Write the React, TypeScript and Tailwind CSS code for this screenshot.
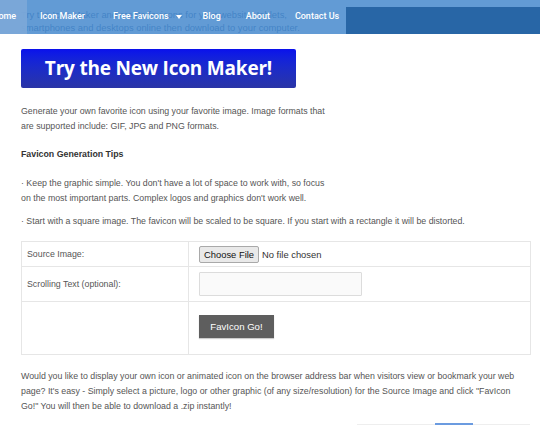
import React from "react";

export default function App() {
  const body = "font-['Liberation_Sans',Arial,sans-serif] text-[8.8px] text-[#555] leading-[15px]";
  return (
    <div className="relative w-[540px] h-[425px] overflow-hidden bg-white">
      <div className={`${body} px-[21px]`}>
        <div className="pt-[8px] text-[#2a5a92] text-[9.4px] leading-[13px] whitespace-nowrap">
          Try the Icon Maker and create favicons for your website, tablets,
          <br />
          smartphones and desktops online then download to your computer.
        </div>
        <div className="mt-[15px] w-[275px] h-[39px] rounded-[2px] bg-gradient-to-b from-[#0a10ec] to-[#2a34a6] flex items-center justify-center">
          <span className="font-['Open_Sans',sans-serif] font-bold text-white text-[19px] tracking-[-0.2px]">
            Try the New Icon Maker!
          </span>
        </div>
        <p className="mt-[16px] whitespace-nowrap">
          Generate your own favorite icon using your favorite image. Image formats that
          <br />
          are supported include: GIF, JPG and PNG formats.
        </p>
        <p className="mt-[13px] font-bold text-[#333] whitespace-nowrap">Favicon Generation Tips</p>
        <p className="mt-[14px] whitespace-nowrap">
          · Keep the graphic simple. You don't have a lot of space to work with, so focus
          <br />
          on the most important parts. Complex logos and graphics don't work well.
        </p>
        <p className="mt-[8px] whitespace-nowrap">
          · Start with a square image. The favicon will be scaled to be square. If you start with a rectangle it will be distorted.
        </p>
        <div className="mt-[12px] w-[510px] border border-[#e6e6e6]">
          <div className="flex h-[25px] border-b border-[#e6e6e6]">
            <div className="w-[167px] border-r border-[#e6e6e6] pl-[5px] flex items-center">Source Image:</div>
            <div className="flex-1 pl-[10px] flex items-center">
              <span className="h-[17px] px-[4px] border border-[#a9a9a9] bg-[#e9e9e9] rounded-[2px] text-[#111] flex items-center text-[9.4px]">
                Choose File
              </span>
              <span className="ml-[3px] text-[#333] text-[9.4px]">No file chosen</span>
            </div>
          </div>
          <div className="flex h-[35px] border-b border-[#e6e6e6]">
            <div className="w-[167px] border-r border-[#e6e6e6] pl-[5px] flex items-center">Scrolling Text (optional):</div>
            <div className="flex-1 pl-[10px] flex items-center">
              <div className="w-[163px] h-[24px] border border-[#dcdcdc] bg-[#fafafa] rounded-[1px]" />
            </div>
          </div>
          <div className="flex h-[52px]">
            <div className="w-[167px] border-r border-[#e6e6e6]" />
            <div className="flex-1 pl-[10px] pt-[13px]">
              <div className="w-[75px] h-[23px] bg-[#5e5e5e] text-white flex items-center justify-center text-[9.6px] shadow-[0_1px_1px_rgba(0,0,0,0.2)]">
                FavIcon Go!
              </div>
            </div>
          </div>
        </div>
        <p className="mt-[14px] whitespace-nowrap">
          Would you like to display your own icon or animated icon on the browser address bar when visitors view or bookmark your web
          <br />
          page? It's easy - Simply select a picture, logo or other graphic (of any size/resolution) for the Source Image and click "FavIcon
          <br />
          Go!" You will then be able to download a .zip instantly!
        </p>
      </div>

      <div className="absolute left-[357px] right-[10px] bottom-0 h-[1px] bg-[#eeeeee]" />
      <div className="absolute left-[435px] w-[38px] bottom-0 h-[2px] bg-[#6b9be0]" />

      <nav className="absolute top-0 left-0 w-full h-[34px] bg-[rgba(72,138,206,0.86)] flex font-['Roboto',sans-serif] text-[9px] font-medium text-white">
        <div className="w-[27px] h-full bg-[rgba(125,168,216,0.9)] flex items-center overflow-hidden">
          <span className="whitespace-nowrap ml-[-8px]">Home</span>
        </div>
        <div className="flex items-center h-full">
          <span className="ml-[13px]">Icon Maker</span>
          <span className="ml-[28px] flex items-center">
            Free Favicons
            <svg width="6" height="4" viewBox="0 0 6 4" className="ml-[7px]">
              <path d="M0 0h6L3 4z" fill="white" />
            </svg>
          </span>
          <span className="ml-[21px]">Blog</span>
          <span className="ml-[25px]">About</span>
          <span className="ml-[25px]">Contact Us</span>
        </div>
        <div className="flex-1 pt-[7px] ml-[7px]">
          <div className="h-full bg-[#2866a6]" />
        </div>
      </nav>
    </div>
  );
}
